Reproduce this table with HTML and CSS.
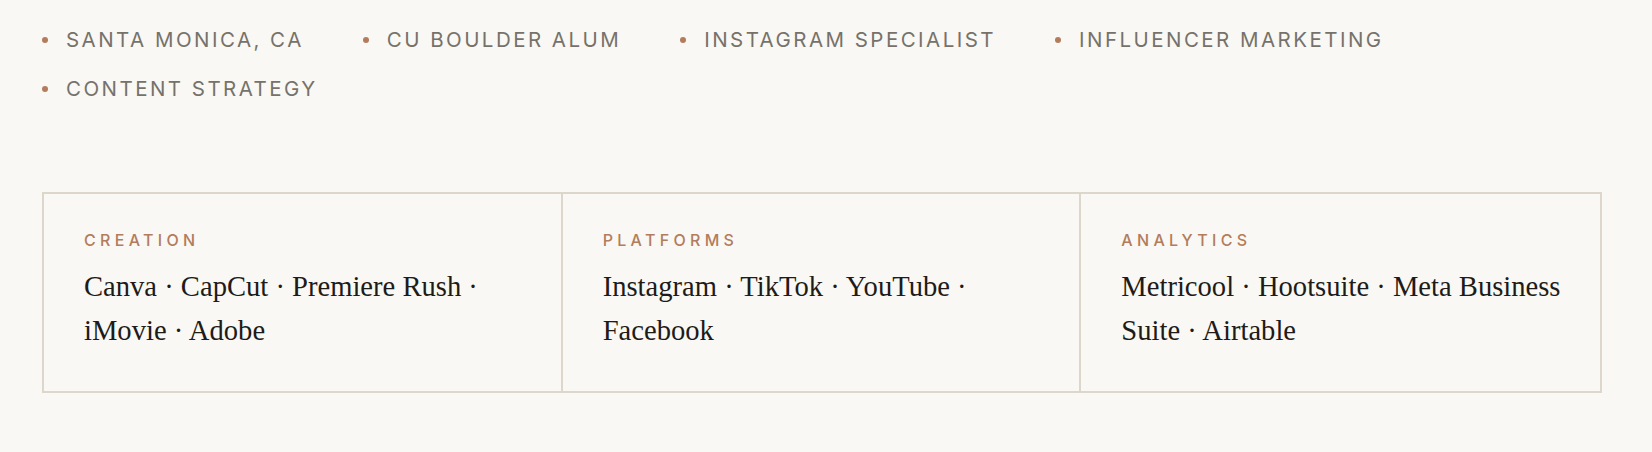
FILE: index.html
```html
<!DOCTYPE html>
<html lang="en">
<head>
<meta charset="utf-8">
<title>Skills</title>
<link rel="stylesheet" href="styles.css">
</head>
<body>
<main class="page">
  <ul class="tags">
    <li class="tag">Santa Monica, CA</li>
    <li class="tag">CU Boulder Alum</li>
    <li class="tag">Instagram Specialist</li>
    <li class="tag">Influencer Marketing</li>
    <li class="tag">Content Strategy</li>
  </ul>
  <section class="skills">
    <div class="skill">
      <h3 class="skill-label">Creation</h3>
      <p class="skill-text">Canva · CapCut · Premiere Rush · iMovie · Adobe</p>
    </div>
    <div class="skill">
      <h3 class="skill-label">Platforms</h3>
      <p class="skill-text">Instagram · TikTok · YouTube · Facebook</p>
    </div>
    <div class="skill">
      <h3 class="skill-label">Analytics</h3>
      <p class="skill-text">Metricool · Hootsuite · Meta Business Suite · Airtable</p>
    </div>
  </section>
</main>
</body>
</html>
```
FILE: styles.css
```css
html, body {
  margin: 0;
  padding: 0;
  background: #f9f8f4;
}
.page {
  padding: 25px 50px 0 42px;
}
.tags {
  list-style: none;
  margin: 0;
  padding: 0;
  display: flex;
  flex-wrap: wrap;
  column-gap: 59px;
  row-gap: 20px;
}
.tag {
  display: flex;
  align-items: center;
  gap: 18px;
  font-family: Inter, "Liberation Sans", sans-serif;
  font-size: 20.5px;
  line-height: 29px;
  letter-spacing: 0.12em;
  text-transform: uppercase;
  color: #76726a;
}
.tag::before {
  content: "";
  width: 6px;
  height: 6px;
  border-radius: 50%;
  background: #b37c5c;
  flex: none;
}
.skills {
  margin-top: 89px;
  display: grid;
  grid-template-columns: repeat(3, 1fr);
  border: 2px solid #ddd7cb;
}
.skill {
  padding: 35px 28px 38px 40px;
  border-right: 2px solid #ddd7cb;
}
.skill:last-child {
  border-right: none;
}
.skill-label {
  margin: 0 0 14px;
  font-family: Inter, "Liberation Sans", sans-serif;
  font-weight: 500;
  font-size: 16px;
  line-height: 22px;
  letter-spacing: 0.27em;
  text-transform: uppercase;
  color: #b37c5c;
}
.skill-text {
  margin: 0;
  font-family: "Liberation Serif", "Times New Roman", serif;
  font-size: 28.6px;
  line-height: 44px;
  color: #1e1b18;
}
```
